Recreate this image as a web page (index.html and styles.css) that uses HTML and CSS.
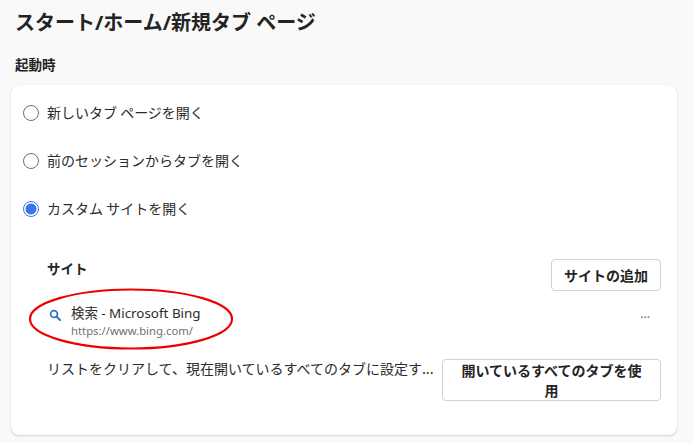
FILE: index.html
```html
<!DOCTYPE html>
<html lang="ja">
<head>
<meta charset="utf-8">
<title>スタート/ホーム/新規タブ ページ</title>
<link rel="stylesheet" href="styles.css">
</head>
<body>
<main class="page">
  <h1 class="title">スタート/ホーム/新規タブ ページ</h1>
  <h2 class="section">起動時</h2>
  <section class="card">
    <div class="option"><span class="radio"></span><span>新しいタブ ページを開く</span></div>
    <div class="option"><span class="radio"></span><span>前のセッションからタブを開く</span></div>
    <div class="option"><span class="radio checked"></span><span>カスタム サイトを開く</span></div>
    <div class="sites">
      <div class="sites-head">
        <span class="sites-title">サイト</span>
        <button class="btn add">サイトの追加</button>
      </div>
      <div class="site">
        <svg class="site-icon" width="12" height="12" viewBox="0 0 12 12"><circle cx="5" cy="5" r="3.4" fill="none" stroke="#2f72c4" stroke-width="1.7"/><path d="M7.6 7.6 11 11" stroke="#2f72c4" stroke-width="2" stroke-linecap="round"/></svg>
        <div class="site-text">
          <div class="site-name">検索 - Microsoft Bing</div>
          <div class="site-url">https://www.bing.com/</div>
        </div>
        <span class="more">...</span>
      </div>
      <div class="foot">
        <span class="foot-text">リストをクリアして、現在開いているすべてのタブに設定す...</span>
        <button class="btn use">開いているすべてのタブを使用</button>
      </div>
    </div>
    <svg class="mark" width="206" height="64" viewBox="0 0 206 64"><ellipse cx="103" cy="32" rx="101" ry="29.5" fill="none" stroke="#ee0000" stroke-width="2.2"/></svg>
  </section>
</main>
</body>
</html>
```
FILE: styles.css
```css
* { box-sizing: border-box; }
html, body { margin: 0; height: 100%; }
body {
  background: #f9f9f9;
  color: #1f1f1f;
  font-family: "Noto Sans", "Noto Sans CJK JP", sans-serif;
  overflow: hidden;
}
.page { padding: 8px 17px 0 11px; }
.title {
  margin: 0 0 0 4px;
  font-family: "Noto Sans", "Noto Sans CJK JP", sans-serif;
  font-size: 20px;
  line-height: 29px;
  font-weight: 700;
  color: #242424;
}
.section {
  margin: 17px 0 0 4px;
  font-family: "Noto Sans CJK JP", sans-serif;
  font-size: 13.5px;
  line-height: 20px;
  font-weight: 700;
  color: #242424;
}
.card {
  position: relative;
  margin-top: 11px;
  height: 350px;
  background: #fff;
  border-radius: 8px;
  box-shadow: 0 0 1px rgba(0,0,0,.2), 0 1px 2px rgba(0,0,0,.14);
  padding: 3px 16px 0 12px;
}
.option {
  display: flex;
  align-items: center;
  gap: 8px;
  height: 48px;
  font-family: "Noto Sans CJK JP", sans-serif;
  font-size: 14px;
  color: #2b2b2b;
}
.radio {
  width: 16px;
  height: 16px;
  margin-top: 2px;
  border: 1.2px solid #707070;
  border-radius: 50%;
  flex: none;
  background: #fff;
}
.radio.checked {
  border-color: #3b78e7;
  background: radial-gradient(circle, #3b78e7 0 5.2px, #fff 5.8px);
}
.sites { padding: 27px 0 0 24px; }
.sites-head {
  display: flex;
  justify-content: space-between;
  height: 32px;
}
.sites-title {
  font-family: "Noto Sans CJK JP", sans-serif;
  font-size: 13.5px;
  line-height: 20px;
  font-weight: 700;
  color: #242424;
  margin-top: -1px;
}
.btn {
  font-family: "Noto Sans CJK JP", sans-serif;
  font-size: 14px;
  font-weight: 700;
  color: #242424;
  background: #fff;
  border: 1px solid #d1d1d1;
  border-radius: 4px;
  padding: 0;
}
.add { width: 110px; height: 32px; }
.site {
  display: flex;
  align-items: flex-start;
  height: 68px;
  margin-left: 2px;
  padding: 13px 11px 0 0;
}
.site-icon { flex: none; margin: 5px 10px 0 0; }
.site-text { flex: 1; }
.site-name { font-size: 13.4px; line-height: 18px; color: #2b2b2b; }
.site-url { font-size: 11.3px; line-height: 16px; color: #6f6f6f; margin-top: 1px; }
.more { font-size: 12px; color: #616161; margin-top: 1px; }
.foot {
  display: flex;
  align-items: flex-start;
  justify-content: space-between;
}
.foot-text {
  font-family: "Noto Sans CJK JP", sans-serif;
  font-size: 14px;
  line-height: 20px;
  color: #2b2b2b;
  margin-top: -1px;
  white-space: nowrap;
}
.use {
  width: 219px;
  height: 42px;
  line-height: 20px;
  padding: 0 14px;
}
.mark { position: absolute; left: 17px; top: 202px; }
```
